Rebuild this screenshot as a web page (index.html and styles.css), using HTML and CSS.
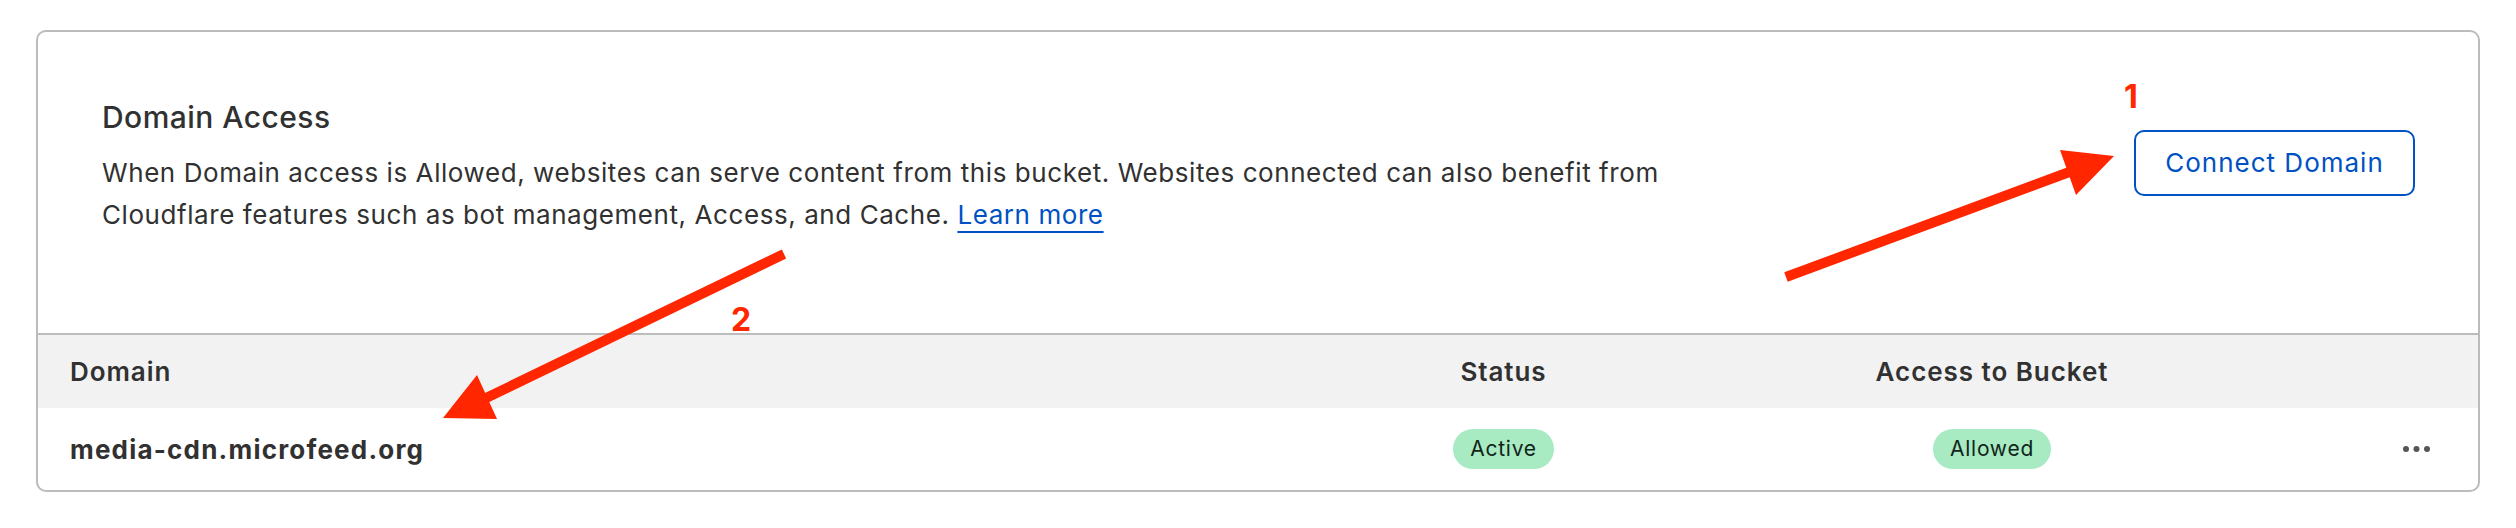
FILE: index.html
```html
<!DOCTYPE html>
<html lang="en">
<head>
<meta charset="utf-8">
<title>Domain Access</title>
<link rel="stylesheet" href="styles.css">
</head>
<body>
<div class="page">
  <section class="card">
    <div class="intro">
      <div class="intro-text">
        <h2 class="title">Domain Access</h2>
        <p class="desc">When Domain access is Allowed, websites can serve content from this bucket. Websites connected can also benefit from Cloudflare features such as bot management, Access, and Cache. <a class="link" href="#">Learn more</a></p>
      </div>
      <button class="btn" type="button">Connect Domain</button>
    </div>
    <div class="table">
      <div class="row head">
        <div class="cell">Domain</div>
        <div class="cell center">Status</div>
        <div class="cell center">Access to Bucket</div>
        <div class="cell"></div>
      </div>
      <div class="row body">
        <div class="cell domain">media-cdn.microfeed.org</div>
        <div class="cell center"><span class="badge">Active</span></div>
        <div class="cell center"><span class="badge">Allowed</span></div>
        <div class="cell end">
          <svg class="more" width="27" height="6" viewBox="0 0 27 6"><circle cx="3" cy="3" r="3"/><circle cx="13.5" cy="3" r="3"/><circle cx="24" cy="3" r="3"/></svg>
        </div>
      </div>
    </div>
  </section>

  <svg class="arrows" width="2516" height="528" viewBox="0 0 2516 528">
    <line x1="1786" y1="277" x2="2072" y2="171" stroke="#ff2600" stroke-width="10"/>
    <polygon points="2060,150 2114,156 2076,195" fill="#ff2600"/>
    <line x1="784" y1="254" x2="484" y2="399" stroke="#ff2600" stroke-width="10"/>
    <polygon points="477,375 443,418 497,419" fill="#ff2600"/>
  </svg>
  <span class="num num-1">1</span>
  <span class="num num-2">2</span>
</div>
</body>
</html>
```
FILE: styles.css
```css
* { box-sizing: border-box; }
html, body { margin: 0; padding: 0; background: #ffffff; }
body {
  font-family: Inter, "Noto Sans", "Liberation Sans", sans-serif;
  color: #313131;
}
.page {
  position: relative;
  width: 2516px;
  height: 528px;
  padding: 30px 36px;
}
.card {
  border: 2px solid #bcbcbc;
  border-radius: 10px;
  overflow: hidden;
  background: #fff;
}
.intro {
  display: flex;
  align-items: center;
  justify-content: space-between;
  padding: 67px 63px 97px 64px;
}
.title {
  margin: 0 0 17px;
  font-size: 30px;
  line-height: 36px;
  font-weight: 500;
  letter-spacing: 0.45px;
  color: #313131;
}
.desc {
  margin: 0;
  max-width: 1620px;
  font-size: 26px;
  line-height: 42px;
  letter-spacing: 0.57px;
  color: #313131;
}
.link {
  color: #0051c3;
  text-decoration: underline;
  text-decoration-thickness: 2px;
  text-underline-offset: 7px;
}
.btn {
  font-family: inherit;
  font-size: 26px;
  line-height: 30px;
  letter-spacing: 1px;
  color: #0051c3;
  background: #fff;
  border: 2px solid #0051c3;
  border-radius: 10px;
  height: 66px;
  width: 281px;
  padding: 0;
  margin-bottom: 9px;
  flex: none;
}
.table {
  border-top: 2px solid #bcbcbc;
}
.row {
  display: grid;
  grid-template-columns: 1310px 247px 730px 73px;
  align-items: center;
  padding: 0 48px 0 32px;
}
.row.head {
  height: 73px;
  background: #f2f2f2;
  font-size: 26px;
  font-weight: 600;
  letter-spacing: 0.95px;
}
.row.body {
  height: 82px;
  font-size: 26px;
}
.cell.center { text-align: center; }
.cell.end { display: flex; justify-content: flex-end; }
.domain { font-weight: 700; letter-spacing: 1.2px; }
.badge {
  display: inline-block;
  height: 40px;
  line-height: 40px;
  padding: 0 17px;
  border-radius: 20px;
  background: #a8eac1;
  color: #10251a;
  font-size: 21px;
  letter-spacing: 0.75px;
  font-weight: 400;
}
.more { fill: #555555; display: block; }
.arrows {
  position: absolute;
  left: 0;
  top: 0;
  pointer-events: none;
}
.num {
  position: absolute;
  font-size: 32px;
  line-height: 32px;
  font-weight: 700;
  color: #ff2600;
}
.num-1 { left: 2124px; top: 81px; }
.num-2 { left: 731px; top: 304px; }
```
